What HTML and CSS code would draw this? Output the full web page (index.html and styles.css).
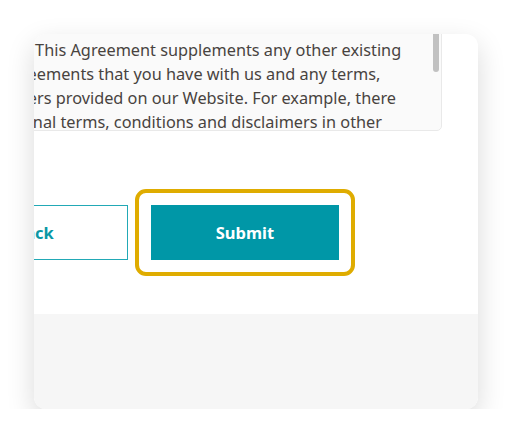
FILE: index.html
```html
<!DOCTYPE html>
<html lang="en">
<head>
    <meta charset="UTF-8">
    <meta name="viewport" content="width=device-width, initial-scale=1.0">
    <title>Terms of Use</title>
    <link rel="stylesheet" href="styles.css">
</head>
<body>

<div class="modal">
    <div class="modal-body">
        <div class="terms">
            <p class="terms-text">
                Use This Agreement supplements any other existing<br>
                agreements that you have with us and any terms,<br>
                others provided on our Website. For example, there<br>
                journal terms, conditions and disclaimers in other<br>
                parts of our Website that apply to specific services.
            </p>
            <div class="scroll-thumb"></div>
        </div>

        <div class="actions">
            <button class="btn btn-outline">Back</button>
            <button class="btn btn-primary">Submit</button>
        </div>
    </div>
    <div class="modal-footer"></div>
</div>

</body>
</html>
```

FILE: styles.css
```css
body {
    margin: 0;
    background-color: #ffffff;
    font-family: "Noto Sans", "Inter", Arial, sans-serif;
    color: #48433f;
}
.modal {
    margin: 34px 0 0 34px;
    width: 444px;
    height: 375px;
    border-radius: 12px;
    background-color: #ffffff;
    box-shadow: 0 10px 28px rgba(0, 0, 0, 0.15);
    overflow: hidden;
    display: flex;
    flex-direction: column;
}
.modal-body {
    flex: 1;
    overflow: hidden;
}
.modal-footer {
    height: 95px;
    background-color: #f6f6f6;
}
.terms {
    position: relative;
    height: 96px;
    margin: -1px 36px 0 -40px;
    background-color: #fafafa;
    border: 1px solid #e9e9e9;
    border-radius: 0 0 5px 0;
    overflow: hidden;
}
.terms-text {
    margin: 0;
    padding: 4px 0 0 7px;
    font-size: 16.3px;
    line-height: 24px;
    white-space: nowrap;
}
.scroll-thumb {
    position: absolute;
    top: 0;
    right: 2px;
    width: 6px;
    height: 38px;
    border-radius: 0 0 3px 3px;
    background-color: #c1c1c1;
}
.actions {
    display: flex;
    gap: 23px;
    margin: 74px 0 0 -94px;
}
.btn {
    width: 188px;
    height: 55px;
    font-family: "Noto Sans", "Inter", Arial, sans-serif;
    font-size: 16.5px;
    font-weight: bold;
    cursor: pointer;
}
.btn-outline {
    background-color: #ffffff;
    color: #0a97a5;
    border: 1px solid #22a9b6;
}
.btn-primary {
    position: relative;
    background-color: #0097a7;
    color: #ffffff;
    border: none;
}
/* focus highlight around the submit button */
.btn-primary::after {
    content: "";
    position: absolute;
    inset: -16px;
    border: 4px solid #dfac00;
    border-radius: 11px;
}
```
